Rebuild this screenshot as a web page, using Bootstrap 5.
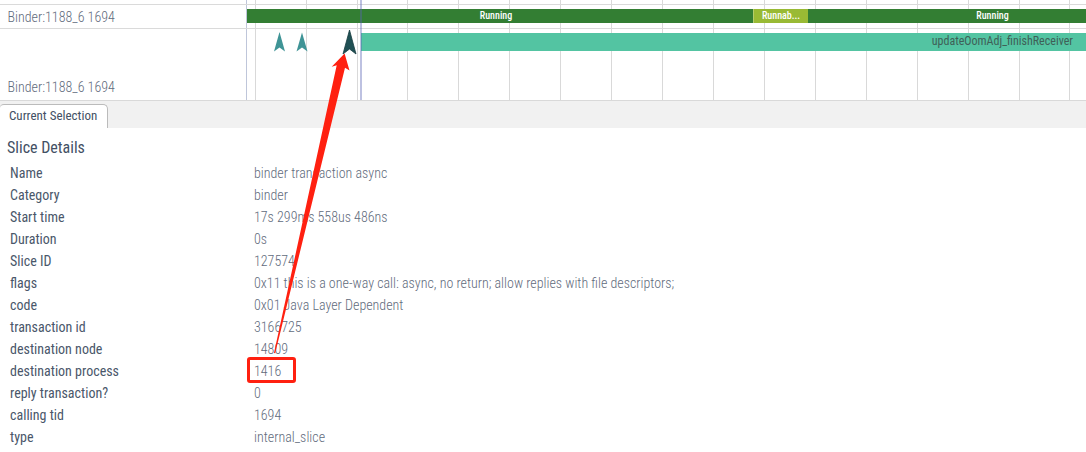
<!DOCTYPE html>
<html lang="en">
<head>
<meta charset="utf-8">
<meta name="viewport" content="width=device-width, initial-scale=1">
<title>Slice Details</title>
<link href="https://cdn.jsdelivr.net/npm/bootstrap@5.3.0/dist/css/bootstrap.min.css" rel="stylesheet">
<style>
body{font-family:"Roboto Condensed",Roboto,sans-serif;font-stretch:75%;font-size:14px;color:#435064;height:452px}
.timeline{height:101px;border-bottom:1px solid #d9d9d9}
.lane-state{height:23px}
.lane-slice{height:71px}
.lane-gap{height:4px}
.track-name{width:246px;padding:2px 0 3px 7.5px;font-weight:300;color:#5f6b7c;line-height:20px}
.sep{height:1px;background:#dadada}
.state-bar{padding:4px 0 0 1px}
.state{height:14px;font-size:10px;line-height:14px;font-weight:500;color:#fff;text-align:center}
.running{background:#337e33}
.runnable{background:#99ba34;border-left:1px solid #b4cd6c}
.label-shift{padding-left:91px}
.slice{height:18px;line-height:17px;font-size:12px;background:#53c4a2;color:#3f5f57;margin:4px 0 0 115px;padding-right:13px}
.tabs{height:27px;background:#f1f1f1;padding-top:3px}
.tab-item{width:108px;height:24px;background:#fff;border:1px solid #bbb;border-width:1px 1px 0 0;border-radius:4px 5px 0 0;padding-left:9px;line-height:22px;font-size:13px}
.heading{font-size:16px;line-height:20px;padding:10px 0 0 7px;height:34px}
.detail{height:22px;line-height:22px;padding-left:10px}
.key{width:244px;font-weight:400;color:#4a576a}
.val{font-weight:300;color:#5f6b7c}
</style>
</head>
<body class="bg-white overflow-hidden position-relative">
<svg class="position-absolute top-0 start-0" width="1086" height="100">
<path fill="#d9d9d9" d="M255 0h1v100h-1zM306 0h1v100h-1zM357 0h1v100h-1zM407 0h1v100h-1zM458 0h1v100h-1zM509 0h1v100h-1zM560 0h1v100h-1zM611 0h1v100h-1zM662 0h1v100h-1zM713 0h1v100h-1zM764 0h1v100h-1zM815 0h1v100h-1zM866 0h1v100h-1zM917 0h1v100h-1zM968 0h1v100h-1zM1019 0h1v100h-1zM1069 0h1v100h-1z"/>
<path d="M246 0h1v100h-1z" fill="#bfc6da"/>
</svg>
<main class="position-relative">
<section class="timeline">
<div class="lane-gap"></div><div class="sep"></div>
<div class="lane-state d-flex">
<div class="track-name flex-shrink-0">Binder:1188_6 1694</div>
<div class="state-bar d-flex flex-grow-1">
<div class="state running" style="width:506px"><span class="pe-2">Running</span></div>
<div class="state runnable" style="width:55px">Runnab...</div>
<div class="state running flex-grow-1"><span class="label-shift">Running</span></div>
</div></div>
<div class="sep"></div>
<div class="lane-slice d-flex">
<div class="track-name flex-shrink-0 d-flex align-items-end">Binder:1188_6 1694</div>
<div class="flex-grow-1"><div class="slice text-end">updateOomAdj_finishReceiver</div></div>
</div>
</section>
<nav class="tabs"><div class="tab-item">Current Selection</div></nav>
<section>
<div class="heading">Slice Details</div>
<div class="detail d-flex"><div class="key">Name</div><div class="val">binder transaction async</div></div>
<div class="detail d-flex"><div class="key">Category</div><div class="val">binder</div></div>
<div class="detail d-flex"><div class="key">Start time</div><div class="val">17s 299ms 558us 486ns</div></div>
<div class="detail d-flex"><div class="key">Duration</div><div class="val">0s</div></div>
<div class="detail d-flex"><div class="key">Slice ID</div><div class="val">127574</div></div>
<div class="detail d-flex"><div class="key">flags</div><div class="val">0x11 this is a one-way call: async, no return; allow replies with file descriptors;</div></div>
<div class="detail d-flex"><div class="key">code</div><div class="val">0x01 Java Layer Dependent</div></div>
<div class="detail d-flex"><div class="key">transaction id</div><div class="val">3166725</div></div>
<div class="detail d-flex"><div class="key">destination node</div><div class="val">14809</div></div>
<div class="detail d-flex"><div class="key">destination process</div><div class="val">1416</div></div>
<div class="detail d-flex"><div class="key">reply transaction?</div><div class="val">0</div></div>
<div class="detail d-flex"><div class="key">calling tid</div><div class="val">1694</div></div>
<div class="detail d-flex"><div class="key">type</div><div class="val">internal_slice</div></div>
</section>
</main>
<svg class="position-absolute top-0 start-0" width="1086" height="452">
<path d="M360 0h2v100h-2z" fill="#5a64b4" opacity=".4"/>
<path d="M279.500 32l5.500 19.500-5.500-4-5.500 4zM302 32.500l5.500 19-5.500-4-5.500 4z" fill="#3f9496"/>
<path d="M349.500 30l6.500 24-6.500-5-6.500 5z" fill="#1f5054" stroke="#173c40" stroke-width=".8"/>
<path d="M344.600 53.500L331.700 66.700l5-1.400L274 353l1.200.3L345 67.800l4.500 2.700z" fill="#ff2010"/>
<rect x="248.500" y="358.500" width="46" height="23" rx="1.500" fill="none" stroke="#ff2010" stroke-width="3"/>
</svg>
<script src="https://cdn.jsdelivr.net/npm/bootstrap@5.3.0/dist/js/bootstrap.bundle.min.js"></script>
</body>
</html>
